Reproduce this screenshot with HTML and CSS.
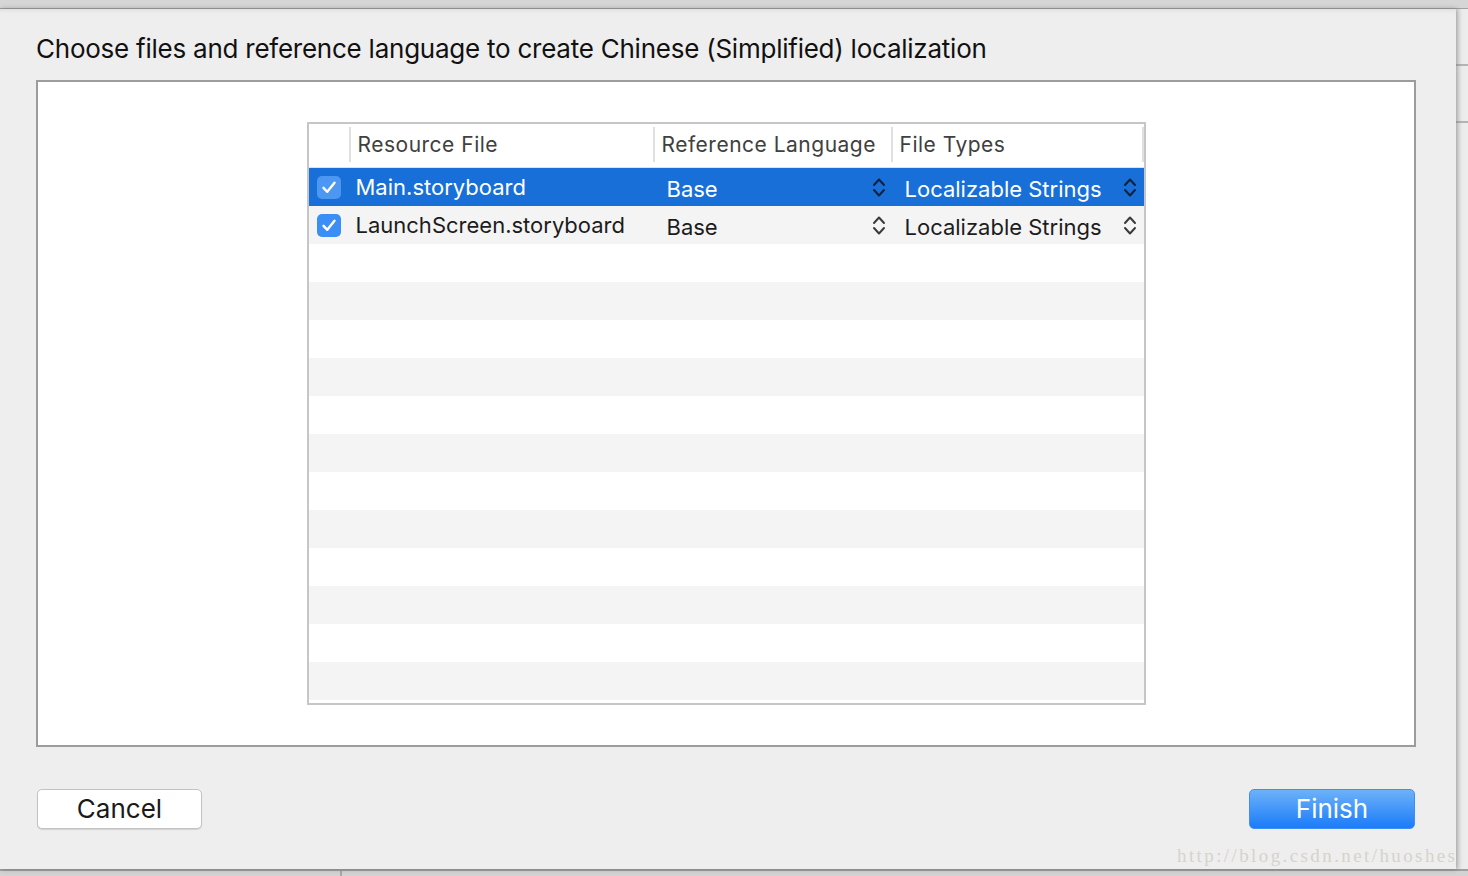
FILE: index.html
```html
<!DOCTYPE html>
<html>
<head>
<meta charset="utf-8">
<link rel="stylesheet" href="styles.css">
</head>
<body>
<div class="screen">
  <div class="topbar"></div>
  <div class="main">
    <div class="sheet">
      <h1 class="title">Choose files and reference language to create Chinese (Simplified) localization</h1>
      <div class="box">
        <div class="table">
          <div class="thead">
            <div class="th th-check"></div>
            <div class="th">Resource File</div>
            <div class="th">Reference Language</div>
            <div class="th">File Types</div>
            <div class="th th-end"></div>
          </div>
          <div class="tr selected">
            <div class="td td-check"><span class="checkbox"><svg viewBox="0 0 24 23" width="24" height="23"><path d="M6.5 11.8 L10.3 15.8 L17.5 6.8" fill="none" stroke="#fff" stroke-width="2.4" stroke-linecap="round" stroke-linejoin="round"/></svg></span></div>
            <div class="td td-name">Main.storyboard</div>
            <div class="td td-pop"><span>Base</span><svg class="stepper" viewBox="0 0 14 21" width="14" height="21"><path d="M2 8 L7 2.5 L12 8 M2 13 L7 18.5 L12 13" fill="none" stroke="currentColor" stroke-width="2" stroke-linecap="round" stroke-linejoin="round"/></svg></div>
            <div class="td td-pop"><span>Localizable Strings</span><svg class="stepper" viewBox="0 0 14 21" width="14" height="21"><path d="M2 8 L7 2.5 L12 8 M2 13 L7 18.5 L12 13" fill="none" stroke="currentColor" stroke-width="2" stroke-linecap="round" stroke-linejoin="round"/></svg></div>
            <div class="td"></div>
          </div>
          <div class="tr alt">
            <div class="td td-check"><span class="checkbox"><svg viewBox="0 0 24 23" width="24" height="23"><path d="M6.5 11.8 L10.3 15.8 L17.5 6.8" fill="none" stroke="#fff" stroke-width="2.4" stroke-linecap="round" stroke-linejoin="round"/></svg></span></div>
            <div class="td td-name">LaunchScreen.storyboard</div>
            <div class="td td-pop"><span>Base</span><svg class="stepper" viewBox="0 0 14 21" width="14" height="21"><path d="M2 8 L7 2.5 L12 8 M2 13 L7 18.5 L12 13" fill="none" stroke="currentColor" stroke-width="2" stroke-linecap="round" stroke-linejoin="round"/></svg></div>
            <div class="td td-pop"><span>Localizable Strings</span><svg class="stepper" viewBox="0 0 14 21" width="14" height="21"><path d="M2 8 L7 2.5 L12 8 M2 13 L7 18.5 L12 13" fill="none" stroke="currentColor" stroke-width="2" stroke-linecap="round" stroke-linejoin="round"/></svg></div>
            <div class="td"></div>
          </div>
          <div class="tr"></div>
          <div class="tr alt"></div>
          <div class="tr"></div>
          <div class="tr alt"></div>
          <div class="tr"></div>
          <div class="tr alt"></div>
          <div class="tr"></div>
          <div class="tr alt"></div>
          <div class="tr"></div>
          <div class="tr alt"></div>
          <div class="tr"></div>
          <div class="tr alt"></div>
        </div>
      </div>
      <div class="actions">
        <button class="btn btn-cancel">Cancel</button>
        <button class="btn btn-finish">Finish</button>
      </div>
      <div class="watermark">http://blog.csdn.net/huoshes</div>
    </div>
    <div class="side">
      <div class="side-seg"></div>
      <div class="side-seg"></div>
    </div>
  </div>
  <div class="bottombar"><div class="vline"></div></div>
</div>
</body>
</html>
```
FILE: styles.css
```css
html, body {
  margin: 0;
  padding: 0;
}
body {
  width: 1468px;
  height: 876px;
  overflow: hidden;
  background: #d5d5d5;
  font-family: "Inter", "Roboto", "Noto Sans", sans-serif;
  color: #1c1c1c;
}
.screen {
  display: flex;
  flex-direction: column;
  height: 876px;
}
.topbar {
  height: 8px;
  background: #d6d6d6;
  border-bottom: 1px solid #a2a2a2;
  flex: none;
}
.main {
  display: flex;
  height: 860px;
  flex: none;
}
.sheet {
  position: relative;
  z-index: 1;
  width: 1456px;
  flex: none;
  background: #eeeeee;
  box-shadow: 1px 0 5px rgba(0,0,0,0.28), inset 0 5px 5px -4px rgba(0,0,0,0.08);
  overflow: hidden;
}
.title {
  margin: 0;
  padding: 24px 0 0 36px;
  font-size: 26px;
  line-height: 32px;
  font-weight: 400;
  letter-spacing: -0.24px;
  color: #111;
}
.box {
  margin: 15px 0 0 36px;
  width: 1380px;
  height: 667px;
  box-sizing: border-box;
  border: 2px solid #9c9c9c;
  background: #fff;
  display: flex;
  justify-content: center;
  padding-top: 40px;
}
.table {
  width: 839px;
  height: 583px;
  box-sizing: border-box;
  border: 2px solid #c6c6c6;
  background: #fff;
  display: flex;
  flex-direction: column;
}
.thead {
  display: grid;
  grid-template-columns: 40px 304px 238px 251px 2px;
  height: 44px;
  box-sizing: border-box;
  padding: 3px 0 5px;
  border-bottom: 1px solid #e2e2e2;
  flex: none;
}
.th {
  border-left: 2px solid #e0e0e0;
  padding-left: 7px;
  font-size: 21px;
  letter-spacing: 0.5px;
  color: #404040;
  display: flex;
  align-items: center;
  white-space: nowrap;
}
.th-check {
  border-left: none;
  padding-left: 0;
}
.th-end {
  padding-left: 0;
}
.tr {
  display: grid;
  grid-template-columns: 40px 304px 238px 251px 2px;
  height: 38px;
  flex: none;
  background: #fff;
}
.tr.alt {
  background: #f4f4f4;
}
.tr.selected {
  background: #176fd7;
  color: #fff;
}
.td {
  display: flex;
  align-items: center;
  font-size: 22px;
  white-space: nowrap;
}
.td-check {
  justify-content: center;
}
.checkbox {
  width: 24px;
  height: 23px;
  border-radius: 5px;
  background: #3b8ef5;
  display: flex;
}
.selected .checkbox {
  background: #4c97f1;
}
.td-name {
  padding-left: 7px;
}
.td-pop {
  padding: 3px 5px 0 14px;
  justify-content: space-between;
}
.stepper {
  color: #3a3a3a;
  margin-top: -3px;
}
.selected .stepper {
  color: #10223a;
}
.actions {
  display: flex;
  justify-content: space-between;
  padding: 42px 41px 0 37px;
}
.btn {
  height: 40px;
  border-radius: 5px;
  font-family: "Inter", "Roboto", "Noto Sans", sans-serif;
  font-size: 26px;
  line-height: 36px;
  padding: 0;
  cursor: default;
}
.btn-cancel {
  width: 165px;
  background: #fff;
  border: 1px solid #c3c3c3;
  box-shadow: 0 1px 1px rgba(0,0,0,0.12);
  color: #1a1a1a;
}
.btn-finish {
  width: 166px;
  background: linear-gradient(#6db2f9, #1b7bf9);
  border: 1px solid #3f8ef2;
  color: #fff;
}
.watermark {
  position: absolute;
  left: 1177px;
  top: 836px;
  font-family: "Liberation Serif", "DejaVu Serif", serif;
  font-size: 19px;
  letter-spacing: 2.4px;
  color: #d5d3cd;
  white-space: nowrap;
}
.side {
  flex: 1;
  background: linear-gradient(to right, #d9d9d9, #ebebeb 6px, #ededed);
  display: flex;
  flex-direction: column;
}
.side-seg {
  height: 55px;
  border-bottom: 2px solid #b4b4b4;
}
.bottombar {
  flex: 1;
  background: #d3d3d3;
  border-top: 2px solid #a0a0a0;
  padding-left: 340px;
  display: flex;
}
.vline {
  width: 2px;
  background: #a8a8a8;
}
```
